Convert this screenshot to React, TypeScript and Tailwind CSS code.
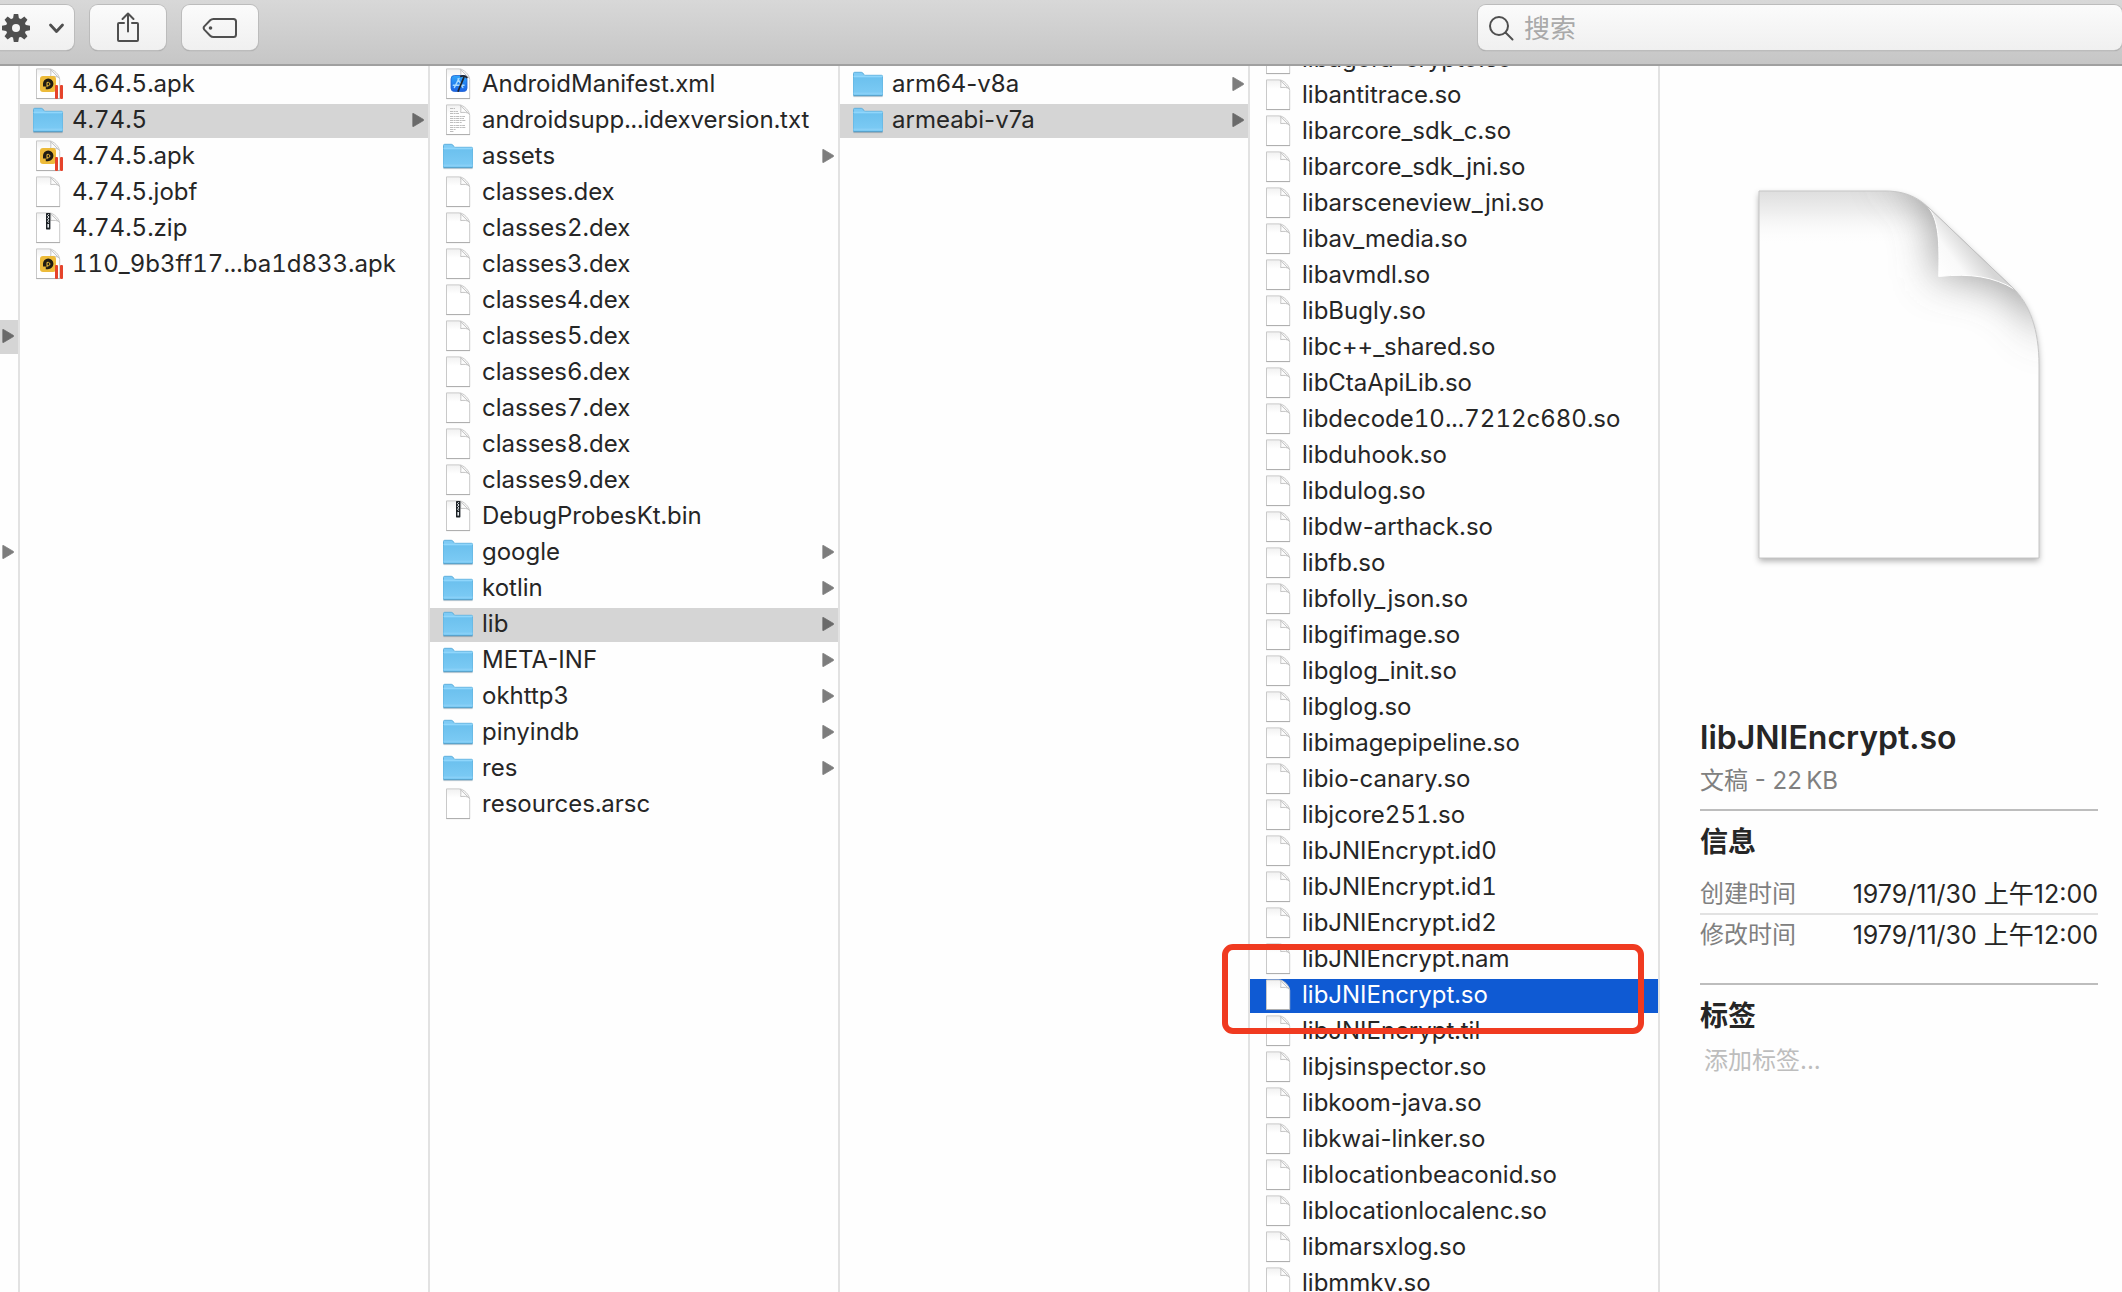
import React from "react";

type Kind = "file" | "folder" | "apk" | "zip" | "xml" | "txt";
type Entry = { name: string; kind: Kind; selected?: boolean; active?: boolean };

const file = (name: string): Entry => ({ name, kind: "file" });
const folder = (name: string, selected = false): Entry => ({ name, kind: "folder", selected });

const releases: Entry[] = [
  { name: "4.64.5.apk", kind: "apk" },
  folder("4.74.5", true),
  { name: "4.74.5.apk", kind: "apk" },
  file("4.74.5.jobf"),
  { name: "4.74.5.zip", kind: "zip" },
  { name: "110_9b3ff17...ba1d833.apk", kind: "apk" },
];

const contents: Entry[] = [
  { name: "AndroidManifest.xml", kind: "xml" },
  { name: "androidsupp...idexversion.txt", kind: "txt" },
  folder("assets"),
  file("classes.dex"),
  file("classes2.dex"),
  file("classes3.dex"),
  file("classes4.dex"),
  file("classes5.dex"),
  file("classes6.dex"),
  file("classes7.dex"),
  file("classes8.dex"),
  file("classes9.dex"),
  { name: "DebugProbesKt.bin", kind: "zip" },
  folder("google"),
  folder("kotlin"),
  folder("lib", true),
  folder("META-INF"),
  folder("okhttp3"),
  folder("pinyindb"),
  folder("res"),
  file("resources.arsc"),
];

const abis: Entry[] = [folder("arm64-v8a"), folder("armeabi-v7a", true)];

const libraries: Entry[] = [
  file("libagora-crypto.so"),
  file("libantitrace.so"),
  file("libarcore_sdk_c.so"),
  file("libarcore_sdk_jni.so"),
  file("libarsceneview_jni.so"),
  file("libav_media.so"),
  file("libavmdl.so"),
  file("libBugly.so"),
  file("libc++_shared.so"),
  file("libCtaApiLib.so"),
  file("libdecode10...7212c680.so"),
  file("libduhook.so"),
  file("libdulog.so"),
  file("libdw-arthack.so"),
  file("libfb.so"),
  file("libfolly_json.so"),
  file("libgifimage.so"),
  file("libglog_init.so"),
  file("libglog.so"),
  file("libimagepipeline.so"),
  file("libio-canary.so"),
  file("libjcore251.so"),
  file("libJNIEncrypt.id0"),
  file("libJNIEncrypt.id1"),
  file("libJNIEncrypt.id2"),
  file("libJNIEncrypt.nam"),
  { name: "libJNIEncrypt.so", kind: "file", active: true },
  file("libJNIEncrypt.til"),
  file("libjsinspector.so"),
  file("libkoom-java.so"),
  file("libkwai-linker.so"),
  file("liblocationbeaconid.so"),
  file("liblocationlocalenc.so"),
  file("libmarsxlog.so"),
  file("libmmkv.so"),
];

function Defs() {
  return (
    <svg className="absolute size-0" aria-hidden="true">
      <defs>
        <linearGradient id="folderFront" x1="0" y1="0" x2="0" y2="1">
          <stop offset="0" stopColor="#6cc1ee" />
          <stop offset="1" stopColor="#7dcbf5" />
        </linearGradient>
        <linearGradient id="xcode" x1="0" y1="0" x2="0" y2="1">
          <stop offset="0" stopColor="#2fa5fb" />
          <stop offset="1" stopColor="#1b62e4" />
        </linearGradient>
        <linearGradient id="pageTop" x1="0" y1="0" x2="0" y2="1">
          <stop offset="0" stopColor="#f1f1f1" />
          <stop offset="0.3" stopColor="#ffffff" />
        </linearGradient>
      </defs>
    </svg>
  );
}

function Page() {
  return (
    <>
      <path d="M4.5 .9H17.5C21.5.9 27.7 7 27.7 11.5V30.5H4.5Z" fill="url(#pageTop)" stroke="#c9c9c9" strokeWidth="1" />
      <path d="M4.2 30.6H28" stroke="#adadad" strokeWidth="1" />
      <path d="M18 1.2C19.3 2.4 18.8 5.5 18.7 8.6C21.5 8.2 25.5 8 27.3 10.2Z" fill="#fdfdfd" stroke="#c4c4c4" strokeWidth="1" strokeLinejoin="round" />
    </>
  );
}

function EntryIcon({ kind }: { kind: Kind }) {
  return (
    <svg viewBox="0 0 32 32" className="size-8 shrink-0" aria-hidden="true">
      {kind === "folder" ? (
        <>
          <path d="M1.5 27V5.5Q1.5 4.3 2.7 4.3H9.2Q10.2 4.3 10.8 5L12 6.7Q12.3 7.3 13.2 7.3H29.5Q30.5 7.3 30.5 8.3V27Z" fill="#7ecbf6" stroke="#5fb0dc" strokeWidth="1" />
          <path d="M1.5 9.5H30.5V26.8Q30.5 27.6 29.6 27.6H2.4Q1.5 27.6 1.5 26.8Z" fill="url(#folderFront)" />
          <path d="M1.5 8.4H30.5" stroke="#8fd6fb" strokeWidth="1.4" />
          <path d="M1.5 25.2H30.5" stroke="#8ed3f8" strokeWidth="1" />
          <path d="M1.3 27.7H30.7" stroke="#559fc8" strokeWidth="1.2" />
          <path d="M1.5 28.7H30.5" stroke="#000" strokeOpacity=".14" strokeWidth="1" />
        </>
      ) : (
        <Page />
      )}
      {kind === "apk" && (
        <>
          <rect x="8" y="8" width="16" height="16" rx="3" fill="#edbb3a" />
          <path d="M11 18.6V15.6A5.2 5.2 0 0 1 21.4 15.6C21.4 18.8 19 21.3 15.8 21.3H13.8V18.6Z" fill="#1f1c14" />
          <path d="M15 19.2V14.4H16.6A1.7 1.7 0 0 1 16.6 17.7H15" fill="none" stroke="#edbb3a" strokeWidth="1" />
          <rect x="23" y="17" width="3" height="14" rx="1" fill="#e5432b" />
          <rect x="28" y="17" width="3" height="14" rx="1" fill="#e5432b" />
        </>
      )}
      {kind === "zip" && (
        <>
          <rect x="14" y="1" width="4.4" height="16.4" rx=".6" fill="#1d2226" />
          <path d="M16.8 2.2L15.4 3.6L17 5L15.4 6.4L17 7.8L15.4 9.2L17 10.6" fill="none" stroke="#e9eef2" strokeWidth="1" />
          <rect x="15.4" y="12" width="1.6" height="3.6" fill="#e9eef2" />
        </>
      )}
      {kind === "xml" && (
        <>
          <rect x="9" y="7.5" width="16" height="16" rx="3.4" fill="url(#xcode)" stroke="#1c5fd0" strokeWidth=".8" />
          <path d="M17 10.5L12.4 19.5M16 11L20.8 19.5M11.3 17.3H22" fill="none" stroke="#a9dbff" strokeWidth="1.5" strokeLinecap="round" />
          <path d="M21.8 9.5L16.2 23" stroke="#20242c" strokeWidth="1.8" strokeLinecap="round" />
          <path d="M18.2 8.6C20.5 7.6 23.2 7.8 25.4 10" fill="none" stroke="#20242c" strokeWidth="1.7" />
        </>
      )}
      {kind === "txt" && (
        <path
          d="M8 4.5H13M8 7.5H16M8 9.5H17M8 12.5H23M8 14.5H22M8 16.5H24M8 18.5H20M8 21.5H23M8 23.5H24M8 25.5H14M8 27.5H12"
          stroke="#b5b5b5"
          strokeWidth=".9"
          strokeDasharray="3 .6 2 .5"
        />
      )}
    </svg>
  );
}

function Arrow({ dark = false }: { dark?: boolean }) {
  return (
    <svg viewBox="0 0 12 14" className="mt-[9px] mr-1 ml-auto h-3.5 w-3 shrink-0" aria-hidden="true">
      <path d="M.8 .6Q.8 .2 1.4 .5L11.4 6.4Q12 7 11.4 7.6L1.4 13.5Q.8 13.8 .8 13.4Z" fill={dark ? "#6a6a6a" : "#7d7d7d"} stroke={dark ? "#6a6a6a" : "#7d7d7d"} strokeWidth=".8" />
    </svg>
  );
}

function Row({ entry }: { entry: Entry }) {
  const tone = entry.active ? "bg-[#0f5ad3] text-white" : entry.selected ? "bg-[#d5d5d5]" : "";
  const figures = entry.name.includes("-") ? "proportional-nums" : "tabular-nums";
  return (
    <li className="relative mb-0.5">
      <button type="button" className={`flex h-[34px] w-full items-start pl-3 text-left ${tone}`}>
        <EntryIcon kind={entry.kind} />
        <span className={`ml-2 leading-8 whitespace-nowrap ${figures}`}>{entry.name}</span>
        {entry.kind === "folder" && <Arrow dark={entry.selected} />}
      </button>
      {entry.active && (
        <span className="pointer-events-none absolute -top-[35px] right-3.5 -bottom-[21px] -left-7 z-10 rounded-[11px] border-6 border-[#f03a20]" />
      )}
    </li>
  );
}

function Column({ label, entries, scrolled = false }: { label: string; entries: Entry[]; scrolled?: boolean }) {
  return (
    <nav aria-label={label} className="w-[410px] shrink-0 border-r-2 border-[#e2e2e2]">
      <ul className={scrolled ? "-mt-[23px]" : "mt-0.5"}>
        {entries.map((entry) => (
          <Row key={entry.name} entry={entry} />
        ))}
      </ul>
    </nav>
  );
}

const toolButton =
  "flex h-[45px] items-center rounded-lg bg-linear-to-b from-[#fbfbfb] to-[#f0f0f0] text-[#4f4f4f] shadow-[0_0_0_1px_#bcbcbc,0_1px_1px_#8c8c8c]";

function Toolbar() {
  return (
    <header className="relative z-20 flex h-[66px] shrink-0 items-start border-b-2 border-[#a0a0a0] bg-linear-to-b from-[#d8d8d8] to-[#c6c6c6] pt-[5px]">
      <button type="button" aria-label="操作" className={`${toolButton} -ml-2 w-[82px] pl-2`}>
        <svg viewBox="0 0 74 45" className="h-[45px] w-[74px]" aria-hidden="true">
          <g transform="translate(16 23)" fill="#4f4f4f">
            {[0, 45, 90, 135].map((a) => (
              <path key={a} d="M-2.9 -10L-2.2 -14H2.2L2.9 -10V10L2.2 14H-2.2L-2.9 10Z" transform={`rotate(${a})`} />
            ))}
            <circle r="10.2" />
            <circle r="4" fill="#f5f5f5" />
          </g>
          <path d="M50.5 20L56.5 26.5L62.5 20" fill="none" stroke="#4f4f4f" strokeWidth="2.8" strokeLinecap="round" strokeLinejoin="round" />
        </svg>
      </button>
      <button type="button" aria-label="共享" className={`${toolButton} ml-4 w-[76px] justify-center`}>
        <svg viewBox="0 0 24 32" className="h-8 w-6" fill="none" stroke="#4f4f4f" strokeWidth="2" strokeLinecap="round" strokeLinejoin="round" aria-hidden="true">
          <path d="M8 11H3Q2 11 2 12V28Q2 29 3 29H21Q22 29 22 28V12Q22 11 21 11H16" />
          <path d="M12 19.5V1.5M6.5 7L12 1.5L17.5 7" />
        </svg>
      </button>
      <button type="button" aria-label="标签" className={`${toolButton} ml-4 w-[76px] justify-center`}>
        <svg viewBox="0 0 36 22" className="h-[22px] w-9" fill="none" stroke="#4f4f4f" strokeWidth="2" strokeLinejoin="round" aria-hidden="true">
          <path d="M11.5 2H31.5Q34 2 34 4.5V17.5Q34 20 31.5 20H11.5Q9.5 20 8.2 18.7L2.3 12.6Q1 11 2.3 9.4L8.2 3.3Q9.5 2 11.5 2Z" />
          <circle cx="8.5" cy="11" r="1.8" fill="#4f4f4f" stroke="none" />
        </svg>
      </button>
      <label className={`${toolButton} ml-auto w-[644px] pl-2.5`}>
        <svg viewBox="0 0 28 28" className="size-7 shrink-0" fill="none" stroke="#4f4f4f" strokeWidth="2" strokeLinecap="round" aria-hidden="true">
          <circle cx="11" cy="12" r="9" />
          <path d="M17.5 18.5L24.5 25.5" />
        </svg>
        <input
          type="search"
          aria-label="搜索"
          placeholder="搜索"
          className="ml-2 min-w-0 flex-1 bg-transparent pt-0.5 text-[26px] leading-8 text-[#262626] outline-none placeholder:text-[#a9a9a9]"
        />
      </label>
    </header>
  );
}

const SHEET = "M10 11H136C162 11 174 22 183 31L263 107C281 124 290 150 290 185V378H10Z";

function DocumentPreview() {
  return (
    <svg viewBox="0 0 300 390" className="mx-auto h-[390px] w-[300px]" role="img" aria-label="文稿">
      <defs>
        <clipPath id="sheet">
          <path d={SHEET} />
        </clipPath>
        <linearGradient id="sheetShade" x1="0" y1="0" x2="0" y2="1">
          <stop offset="0" stopColor="#dedede" />
          <stop offset=".06" stopColor="#efefef" />
          <stop offset=".15" stopColor="#ffffff" stopOpacity="0" />
        </linearGradient>
        <linearGradient id="curl" gradientUnits="userSpaceOnUse" x1="190" y1="97" x2="226" y2="70">
          <stop offset="0" stopColor="#ffffff" />
          <stop offset=".5" stopColor="#f9f9f9" />
          <stop offset="1" stopColor="#d6d6d6" />
        </linearGradient>
        <filter id="soft" x="-50%" y="-50%" width="200%" height="200%">
          <feGaussianBlur stdDeviation="20" />
        </filter>
        <filter id="drop" x="-10%" y="-10%" width="120%" height="120%">
          <feDropShadow dx="0" dy="3" stdDeviation="3" floodColor="#000" floodOpacity=".32" />
        </filter>
      </defs>
      <path d={SHEET} fill="#fefefe" filter="url(#drop)" />
      <g clipPath="url(#sheet)">
        <rect x="10" y="11" width="280" height="367" fill="url(#sheetShade)" />
        <path d="M130 -5C172 2 187 30 187 98C230 94 270 108 300 160L320 60L210 -20Z" fill="#6f6f6f" fillOpacity=".65" filter="url(#soft)" />
      </g>
      <path d={SHEET} fill="none" stroke="#c6c6c6" strokeWidth="1" />
      <path d="M179 27C190 40 190.500 62 189.700 96.500C222 93 245 97 265 109Z" fill="url(#curl)" />
      <path d="M179 27C190 40 190.500 62 189.700 96.500C222 93 245 97 265 109" fill="none" stroke="#fff" strokeWidth="1" />
      <path d="M179 27L265 109" stroke="#c0c0c0" strokeWidth="1" />
    </svg>
  );
}

const facts = [
  ["创建时间", "1979/11/30 上午12:00"],
  ["修改时间", "1979/11/30 上午12:00"],
];

function Preview() {
  return (
    <aside className="min-w-0 flex-1 pt-[114px] pr-6 pl-10">
      <DocumentPreview />
      <h1 className="mt-[148px] text-[32px] leading-10 font-semibold">libJNIEncrypt.so</h1>
      <p className="mt-[5px] text-[24px] leading-9 text-[#808080]">文稿 - 22{"\u2009"}KB</p>
      <section className="mt-2.5 border-t-2 border-[#bdbdbd] pt-[11px]">
        <h2 className="text-[28px] leading-10 font-semibold">信息</h2>
        <table className="mt-3 w-full">
          <tbody className="divide-y-2 divide-[#e2e2e2]">
            {facts.map(([label, value]) => (
              <tr key={label}>
                <th scope="row" className="h-10 p-0 text-left text-[24px] leading-[38px] font-normal text-[#808080]">
                  {label}
                </th>
                <td className="p-0 text-right text-[25px] leading-[38px] whitespace-nowrap">{value}</td>
              </tr>
            ))}
          </tbody>
        </table>
      </section>
      <section className="mt-[29px] border-t-2 border-[#bdbdbd] pt-[11px]">
        <h2 className="text-[28px] leading-10 font-semibold">标签</h2>
        <input
          aria-label="添加标签"
          placeholder="添加标签..."
          className="mt-[7px] w-full pl-1 text-[24px] leading-9 outline-none placeholder:text-[#bdbdbd]"
        />
      </section>
    </aside>
  );
}

export default function App() {
  return (
    <div className="flex h-screen flex-col overflow-hidden bg-[#fefefe] font-['Inter','Noto_Sans_CJK_SC',sans-serif] text-[24px] text-[#262626]">
      <Defs />
      <Toolbar />
      <main className="flex min-h-0 flex-1">
        <div className="w-5 shrink-0 border-r-2 border-[#e2e2e2]">
          <div className="mt-[254px] flex h-[34px] justify-end bg-[#d5d5d5]">
            <Arrow dark />
          </div>
          <div className="mt-[182px] flex h-[34px] justify-end">
            <Arrow />
          </div>
        </div>
        <Column label="版本" entries={releases} />
        <Column label="4.74.5" entries={contents} />
        <Column label="lib" entries={abis} />
        <Column label="armeabi-v7a" entries={libraries} scrolled />
        <Preview />
      </main>
    </div>
  );
}
